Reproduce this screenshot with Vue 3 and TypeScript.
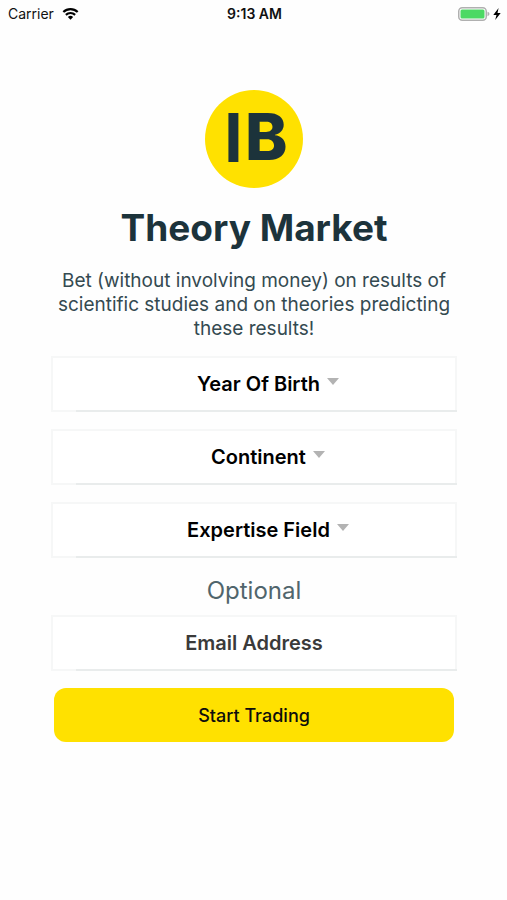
<script setup lang="ts">
import { ref } from 'vue'

interface Picker {
  id: string
  label: string
  options: string[]
}

const pickers: Picker[] = [
  {
    id: 'birth-year',
    label: 'Year Of Birth',
    options: Array.from({ length: 80 }, (_, i) => String(2005 - i)),
  },
  {
    id: 'continent',
    label: 'Continent',
    options: ['Africa', 'Asia', 'Europe', 'North America', 'Oceania', 'South America'],
  },
  {
    id: 'expertise',
    label: 'Expertise Field',
    options: ['Biology', 'Economics', 'Medicine', 'Physics', 'Psychology'],
  },
]

const answers = ref<Record<string, string>>({ 'birth-year': '', continent: '', expertise: '' })
const email = ref('')
</script>

<template>
  <div class="screen">
    <header class="status">
      <div class="status-left">
        <span>Carrier</span>
        <svg class="wifi" viewBox="0 0 18 14" aria-hidden="true">
          <path d="M1.4 4.9 A11 11 0 0 1 16.6 4.9" />
          <path d="M4.1 7.9 A7.2 7.2 0 0 1 13.9 7.9" />
          <path class="wifi-dot" d="M9 13.2 L6.2 10.3 A4 4 0 0 1 11.8 10.3 Z" />
        </svg>
      </div>
      <span class="clock">9:13 AM</span>
      <div class="status-right">
        <svg class="battery" viewBox="0 0 32 14" aria-hidden="true">
          <rect x="0.75" y="0.75" width="27.5" height="12.5" rx="3.5" fill="#fff" stroke="#b0b0b0" stroke-width="1.5" />
          <rect x="2.5" y="2.5" width="24" height="9" rx="1.5" fill="#4cd964" />
          <path d="M29.5 4.8 Q31.5 5.4 31.5 7 Q31.5 8.6 29.5 9.2 Z" fill="#b0b0b0" />
        </svg>
        <svg class="bolt" viewBox="0 0 8 12" aria-hidden="true">
          <path d="M5.6 0 L0.3 6.9 H3.5 L2.2 12 L7.7 4.9 H4.5 Z" fill="#000" />
        </svg>
      </div>
    </header>

    <main class="content">
      <svg class="logo" viewBox="0 0 98 98" role="img" aria-label="IB">
        <circle cx="49" cy="49" r="49" fill="#ffe100" />
        <text class="logo-i" x="19" y="72">I</text>
        <text class="logo-b" x="40" y="70">B</text>
      </svg>
      <h1>Theory Market</h1>
      <p class="intro">
        Bet (without involving money) on results of scientific studies and on theories predicting these results!
      </p>

      <form class="form" @submit.prevent>
        <div v-for="picker in pickers" :key="picker.id" class="field picker">
          <select :id="picker.id" v-model="answers[picker.id]" :aria-label="picker.label">
            <option value="" disabled>{{ picker.label }}</option>
            <option v-for="option in picker.options" :key="option" :value="option">{{ option }}</option>
          </select>
          <svg class="caret" viewBox="0 0 12 7" aria-hidden="true">
            <path d="M0 0 H12 L6 7 Z" fill="#b3b3b3" />
          </svg>
        </div>
        <div class="optional-group">
          <label class="optional" for="email">Optional</label>
          <div class="field">
            <input id="email" v-model="email" type="email" placeholder="Email Address" />
          </div>
        </div>
        <button type="submit">Start Trading</button>
      </form>
    </main>
  </div>
</template>

<style>
body {
  background: #fefefe;
}
</style>

<style scoped>
.screen {
  min-height: 100vh;
  background: #fefefe;
  color: #1c333b;
  font-family: Inter, 'Liberation Sans', sans-serif;
}

.status {
  display: grid;
  grid-template-columns: 1fr auto 1fr;
  align-items: center;
  height: 27px;
  padding: 0 6px 0 8px;
  color: #111;
  font-size: 14px;
}

.status-left,
.status-right {
  display: flex;
  align-items: center;
  gap: 8px;
}

.status-right {
  justify-content: flex-end;
  gap: 3px;
}

.wifi {
  width: 17px;
  height: 14px;
  fill: none;
  stroke: #000;
  stroke-width: 2.3;
}

.wifi-dot {
  fill: #000;
  stroke: none;
}

.clock {
  font-weight: 600;
}

.battery {
  width: 32px;
  height: 14px;
}

.bolt {
  width: 8px;
  height: 12px;
}

.content {
  display: flex;
  flex-direction: column;
  align-items: center;
  padding: 63px 50px 24px 51px;
}

.logo {
  width: 98px;
  height: 98px;
}

.logo text {
  fill: #1c333b;
}

.logo-i {
  font-size: 67px;
  font-weight: 700;
}

.logo-b {
  font-size: 64px;
  font-weight: 800;
}

h1 {
  margin: 16px 0 0;
  font-size: 37px;
  font-weight: 700;
  line-height: 48px;
  text-align: center;
}

.intro {
  margin: 17px 0 0;
  color: #344a51;
  font-size: 19px;
  line-height: 24px;
  text-align: center;
}

.form {
  display: flex;
  flex-direction: column;
  align-self: stretch;
  gap: 17px;
  margin-top: 15px;
}

.field {
  position: relative;
  display: flex;
  align-items: center;
  justify-content: center;
  gap: 7px;
  height: 56px;
  box-sizing: border-box;
  border: 2px solid #f6f7f7;
  background: #fff;
}

.field::after {
  content: '';
  position: absolute;
  right: -2px;
  bottom: -2px;
  left: 23px;
  height: 2px;
  background: #e9ecec;
}

.picker {
  padding-left: 28px;
}

select,
input {
  margin: 0;
  padding: 0;
  border: 0;
  outline: 0;
  background: transparent;
  color: #000;
  font-family: inherit;
  font-size: 20px;
  font-weight: 600;
  line-height: 24px;
}

select {
  appearance: none;
  field-sizing: content;
}

.caret {
  width: 12px;
  height: 7px;
  margin-bottom: 6px;
  pointer-events: none;
}

input {
  width: 100%;
  text-align: center;
}

input::placeholder {
  color: #3a3a3a;
  opacity: 1;
}

.optional-group {
  display: flex;
  flex-direction: column;
  gap: 8px;
}

.optional {
  color: #50656c;
  font-size: 24px;
  line-height: 32px;
  text-align: center;
}

button {
  height: 54px;
  margin: 0 3px;
  padding: 0;
  border: 0;
  border-radius: 12px;
  background: #ffe100;
  color: #0d0d0d;
  font-family: inherit;
  font-size: 18px;
  font-weight: 500;
  cursor: pointer;
}
</style>
